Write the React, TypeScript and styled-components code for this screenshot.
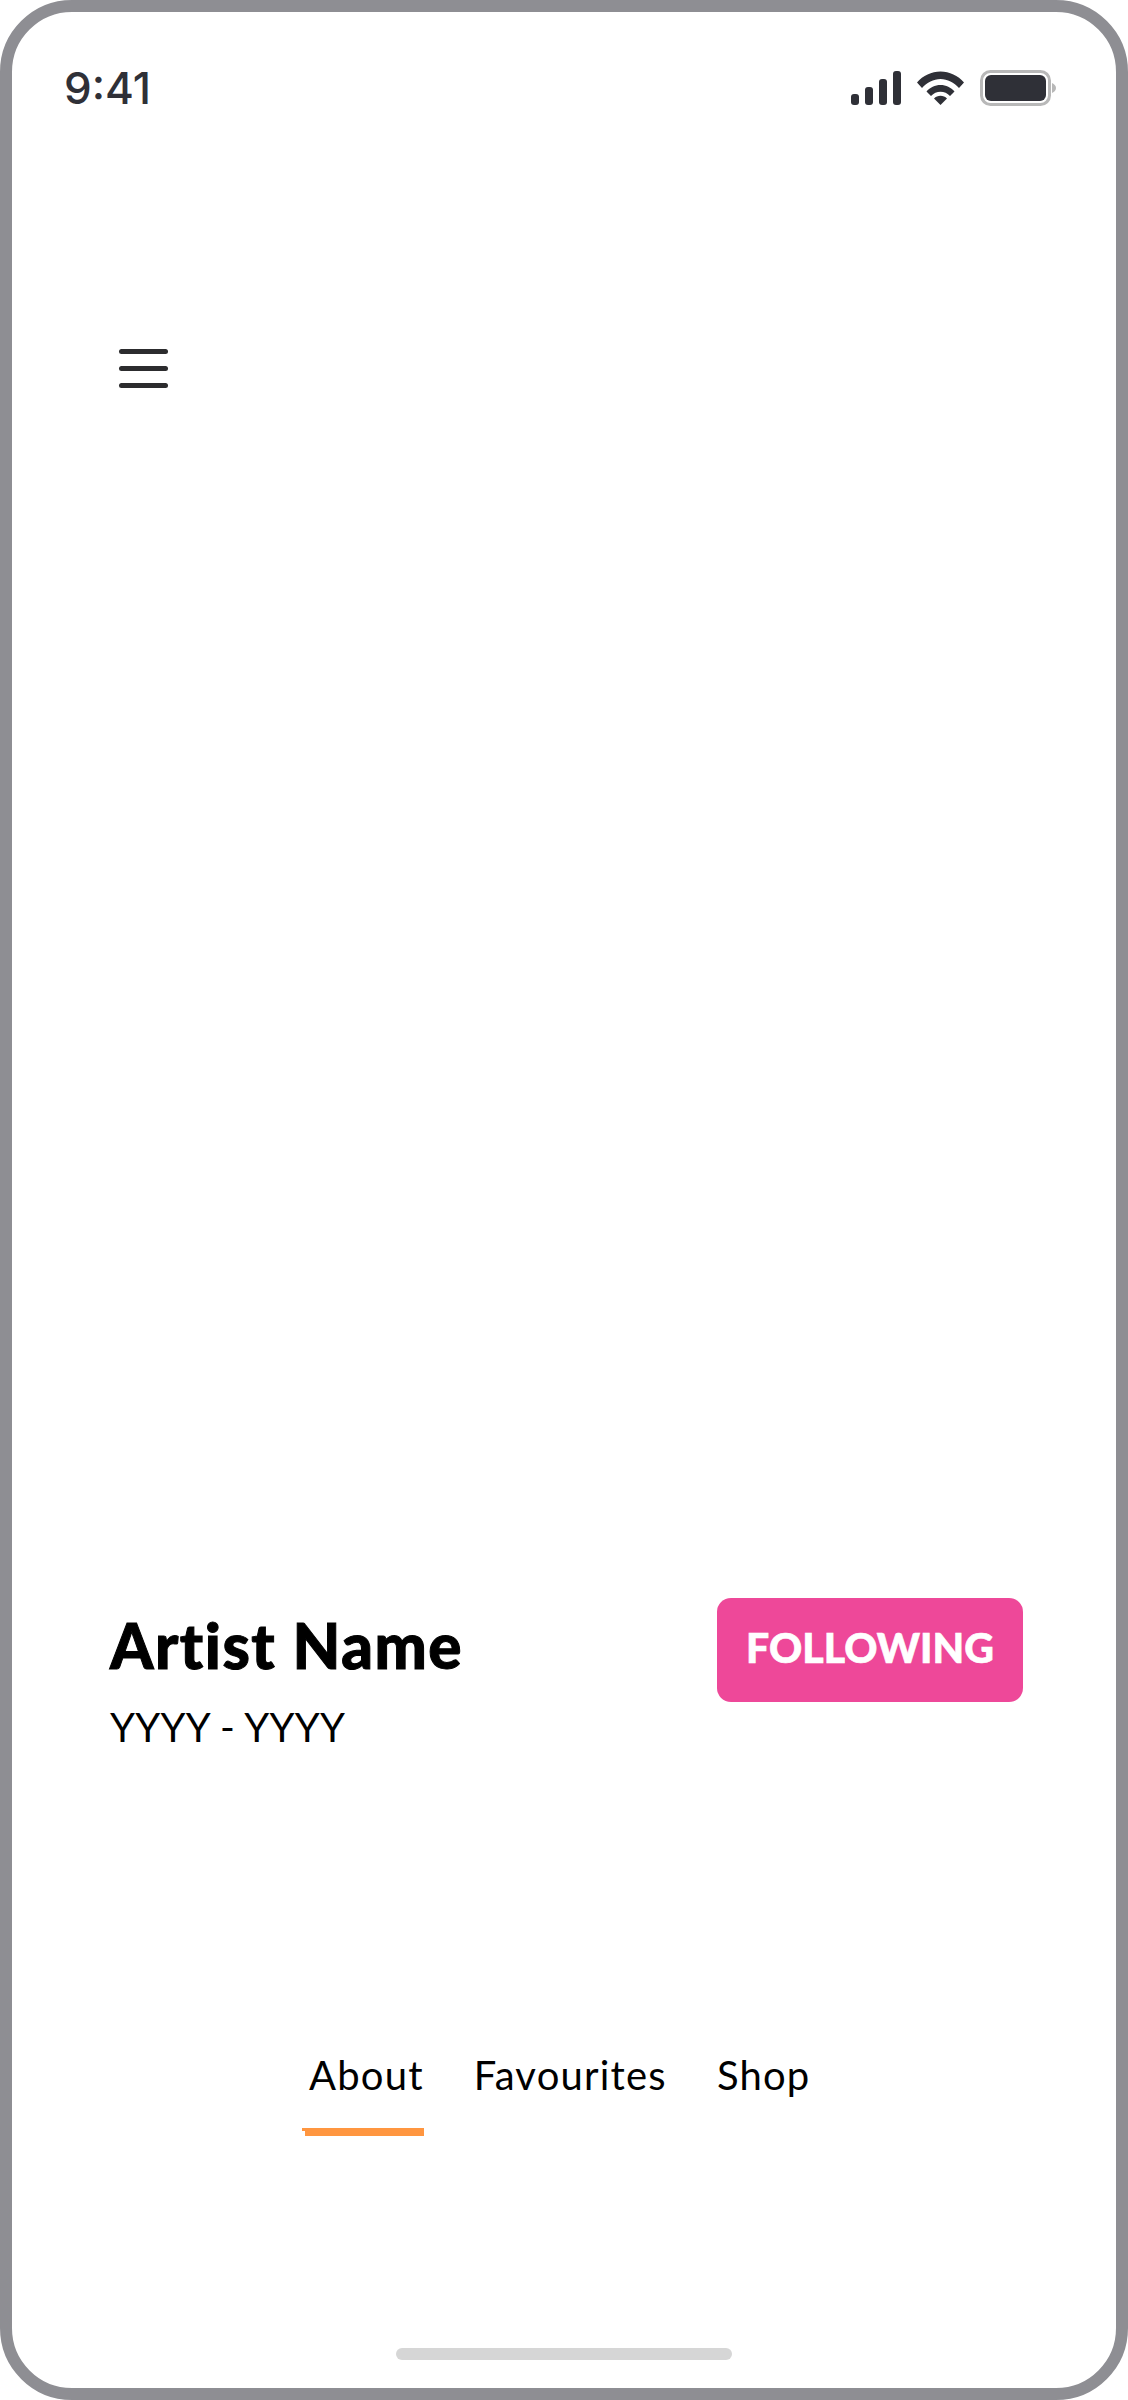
import React from 'react';
import styled, { createGlobalStyle } from 'styled-components';

const GlobalStyle = createGlobalStyle`
  html, body {
    margin: 0;
    padding: 0;
    background: #ffffff;
  }
`;

const Frame = styled.div`
  box-sizing: border-box;
  width: 1128px;
  height: 2400px;
  border: 12px solid #8e8e93;
  border-radius: 72px;
  background: #ffffff;
  display: flex;
  flex-direction: column;
  font-family: 'Lato', 'Liberation Sans', sans-serif;
  color: #000000;
`;

const StatusBar = styled.div`
  display: flex;
  justify-content: space-between;
  align-items: center;
  height: 36px;
  margin-top: 58px;
  padding: 0 60px 0 52px;
`;

const Time = styled.span`
  font-family: 'Inter', sans-serif;
  font-size: 44px;
  font-weight: 500;
  line-height: 36px;
  color: #2f3037;
`;

const StatusIcons = styled.div`
  display: flex;
  align-items: center;
  gap: 16px;
`;

const MenuButton = styled.div`
  display: flex;
  flex-direction: column;
  gap: 12px;
  width: 49px;
  margin: 243px 0 0 107px;
`;

const MenuLine = styled.span`
  display: block;
  height: 5px;
  border-radius: 3px;
  background: #2c2c2e;
`;

const ArtistRow = styled.div`
  display: flex;
  justify-content: space-between;
  align-items: flex-start;
  margin-top: 1210px;
  padding: 0 93px 0 98px;
`;

const ArtistInfo = styled.div`
  display: flex;
  flex-direction: column;
  padding-top: 11px;
`;

const ArtistName = styled.h1`
  margin: 0;
  font-size: 62px;
  font-weight: 900;
  line-height: 72px;
  letter-spacing: 1.5px;
  -webkit-text-stroke: 1px #000;
`;

const Dates = styled.div`
  margin-top: 24px;
  font-size: 40px;
  font-weight: 400;
  line-height: 44px;
  letter-spacing: 0.3px;
`;

const FollowButton = styled.button`
  box-sizing: border-box;
  width: 306px;
  height: 104px;
  border: none;
  border-radius: 14px;
  padding: 0 0 6px;
  background: #ee4899;
  color: #ffffff;
  font-family: inherit;
  font-size: 41px;
  font-weight: 900;
  -webkit-text-stroke: 0.6px #fff;
`;

const Tabs = styled.nav`
  display: flex;
  gap: 50px;
  margin: 303px 0 0 297px;
`;

const Tab = styled.div<{ $active?: boolean }>`
  position: relative;
  font-size: 40px;
  line-height: 46px;
  letter-spacing: 1.2px;
  padding-bottom: 46px;

  ${({ $active }) =>
    $active &&
    `
    &::after {
      content: '';
      position: absolute;
      left: -4px;
      right: 0;
      bottom: 8px;
      height: 8px;
      background: #ff9640;
    }
    &::before {
      content: '';
      position: absolute;
      left: -7px;
      bottom: 13px;
      width: 6px;
      height: 3px;
      background: #ff9640;
    }
  `}
`;

const HomeIndicator = styled.div`
  width: 336px;
  height: 12px;
  margin: auto 0 28px 384px;
  border-radius: 6px;
  background: #d6d6d6;
`;

const SignalIcon = () => (
  <svg width="50" height="34" viewBox="0 0 50 34" fill="#2f3037">
    <rect x="0" y="23" width="8" height="11" rx="3" />
    <rect x="14" y="16" width="8" height="18" rx="3" />
    <rect x="28" y="8" width="8" height="26" rx="3" />
    <rect x="42" y="0" width="8" height="34" rx="3" />
  </svg>
);

const WifiIcon = () => (
  <svg width="47" height="34" viewBox="0 0 47 34" fill="#2f3037">
    <path d="M0 11.5C6 4.5 14.5 0.5 23.5 0.5S41 4.5 47 11.5L42 17C37 11.5 30.5 8 23.5 8S10 11.5 5 17Z" />
    <path d="M9.5 20.5C13 16.5 18 14 23.5 14S34 16.5 37.5 20.5L33 25C30.5 22.3 27 20.8 23.5 20.8S16.5 22.3 14 25Z" />
    <path d="M17 27.5C18.7 25.8 21 24.8 23.5 24.8S28.3 25.8 30 27.5L23.5 34Z" />
  </svg>
);

const BatteryIcon = () => (
  <svg width="76" height="36" viewBox="0 0 76 36">
    <rect x="1.5" y="1.5" width="68" height="33" rx="9" fill="none" stroke="#b8b8b8" strokeWidth="3" />
    <rect x="5" y="5" width="61" height="26" rx="6" fill="#2f3037" />
    <path d="M72 13C74.500 14 76 16 76 18S74.500 22 72 23Z" fill="#b8b8b8" />
  </svg>
);

const App: React.FC = () => {
  return (
    <>
      <GlobalStyle />
      <Frame>
        <StatusBar>
          <Time>9:41</Time>
          <StatusIcons>
            <SignalIcon />
            <WifiIcon />
            <BatteryIcon />
          </StatusIcons>
        </StatusBar>
        <MenuButton>
          <MenuLine />
          <MenuLine />
          <MenuLine />
        </MenuButton>
        <ArtistRow>
          <ArtistInfo>
            <ArtistName>Artist Name</ArtistName>
            <Dates>YYYY - YYYY</Dates>
          </ArtistInfo>
          <FollowButton>FOLLOWING</FollowButton>
        </ArtistRow>
        <Tabs>
          <Tab $active>About</Tab>
          <Tab>Favourites</Tab>
          <Tab>Shop</Tab>
        </Tabs>
        <HomeIndicator />
      </Frame>
    </>
  );
};

export default App;
